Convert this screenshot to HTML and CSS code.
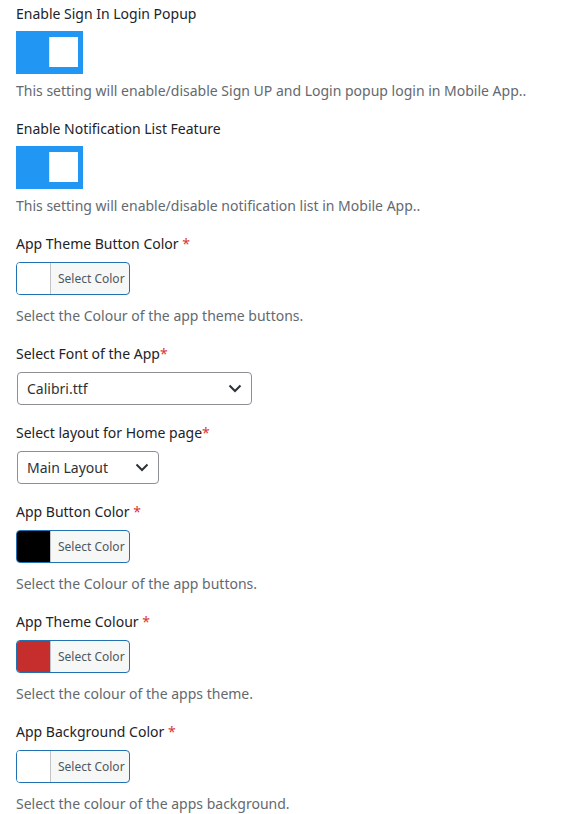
FILE: index.html
```html
<!DOCTYPE html>
<html>
<head>
<meta charset="utf-8">
<link rel="stylesheet" href="styles.css">
</head>
<body>
<div class="form">
  <div class="field">
    <div class="label">Enable Sign In Login Popup</div>
    <div class="toggle"><span class="knob"></span></div>
    <p class="desc desc-toggle">This setting will enable/disable Sign UP and Login popup login in Mobile App..</p>
  </div>
  <div class="field">
    <div class="label">Enable Notification List Feature</div>
    <div class="toggle"><span class="knob"></span></div>
    <p class="desc desc-toggle">This setting will enable/disable notification list in Mobile App..</p>
  </div>
  <div class="field">
    <div class="label label-ctl">App Theme Button Color <span class="req">*</span></div>
    <div class="picker"><span class="swatch swatch-white"></span><span class="picker-text">Select Color</span></div>
    <p class="desc">Select the Colour of the app theme buttons.</p>
  </div>
  <div class="field">
    <div class="label label-ctl">Select Font of the App<span class="req">*</span></div>
    <div class="select select-wide"><span class="select-text">Calibri.ttf</span>
      <svg class="chev" width="14" height="9" viewBox="0 0 14 9"><path d="M1.5 1.5 L7 7 L12.5 1.5" fill="none" stroke="#2c3338" stroke-width="2"/></svg>
    </div>
  </div>
  <div class="field">
    <div class="label label-ctl">Select layout for Home page<span class="req">*</span></div>
    <div class="select select-narrow"><span class="select-text">Main Layout</span>
      <svg class="chev" width="14" height="9" viewBox="0 0 14 9"><path d="M1.5 1.5 L7 7 L12.5 1.5" fill="none" stroke="#2c3338" stroke-width="2"/></svg>
    </div>
  </div>
  <div class="field">
    <div class="label label-ctl">App Button Color <span class="req">*</span></div>
    <div class="picker"><span class="swatch swatch-black"></span><span class="picker-text">Select Color</span></div>
    <p class="desc">Select the Colour of the app buttons.</p>
  </div>
  <div class="field">
    <div class="label label-ctl">App Theme Colour <span class="req">*</span></div>
    <div class="picker"><span class="swatch swatch-red"></span><span class="picker-text">Select Color</span></div>
    <p class="desc">Select the colour of the apps theme.</p>
  </div>
  <div class="field">
    <div class="label label-ctl">App Background Color <span class="req">*</span></div>
    <div class="picker"><span class="swatch swatch-white"></span><span class="picker-text">Select Color</span></div>
    <p class="desc">Select the colour of the apps background.</p>
  </div>
</div>
</body>
</html>
```
FILE: styles.css
```css
html, body {
  margin: 0;
  padding: 0;
  background: #ffffff;
}
body {
  font-family: "Noto Sans", "Open Sans", sans-serif;
  font-size: 14px;
  color: #1d2327;
}
.form {
  padding: 4px 16px 0 16px;
  display: flex;
  flex-direction: column;
  gap: 18px;
}
.field {
  display: flex;
  flex-direction: column;
  align-items: flex-start;
}
.label {
  line-height: 20px;
  height: 20px;
  margin-bottom: 7px;
  color: #1d2327;
  white-space: nowrap;
}
.label-ctl {
  margin-bottom: 8px;
}
.req {
  color: #d63638;
}
.toggle {
  width: 67px;
  height: 43px;
  background: #2196f3;
  display: flex;
  align-items: flex-start;
  justify-content: flex-end;
  box-sizing: border-box;
  padding: 6px 5px 0 0;
}
.knob {
  width: 29px;
  height: 30px;
  background: #ffffff;
  box-sizing: border-box;
  border-left: 1px solid #cfe6fb;
}
.desc {
  margin: 11px 0 0 0;
  line-height: 20px;
  height: 20px;
  color: #646970;
  white-space: nowrap;
}
.desc-toggle {
  margin-top: 7px;
}
.picker {
  width: 114px;
  height: 33px;
  box-sizing: border-box;
  border: 1px solid #2271b1;
  border-radius: 4px;
  display: flex;
  overflow: hidden;
  background: #f6f7f7;
}
.swatch {
  width: 33px;
  height: 100%;
  border-right: 1px solid #c3c4c7;
}
.swatch-white { background: #ffffff; }
.swatch-black { background: #000000; }
.swatch-red { background: #c62d2d; }
.picker-text {
  flex: 1;
  font-size: 12px;
  color: #50575e;
  line-height: 31px;
  padding-left: 7px;
  white-space: nowrap;
}
.select {
  margin-left: 1px;
  height: 33px;
  box-sizing: border-box;
  border: 1px solid #8c8f94;
  border-radius: 4px;
  display: flex;
  align-items: center;
  justify-content: space-between;
  padding: 0 9px 0 9px;
  font-size: 14px;
  color: #2c3338;
}
.select-wide { width: 235px; }
.select-narrow { width: 142px; }
.chev { display: block; }
```
